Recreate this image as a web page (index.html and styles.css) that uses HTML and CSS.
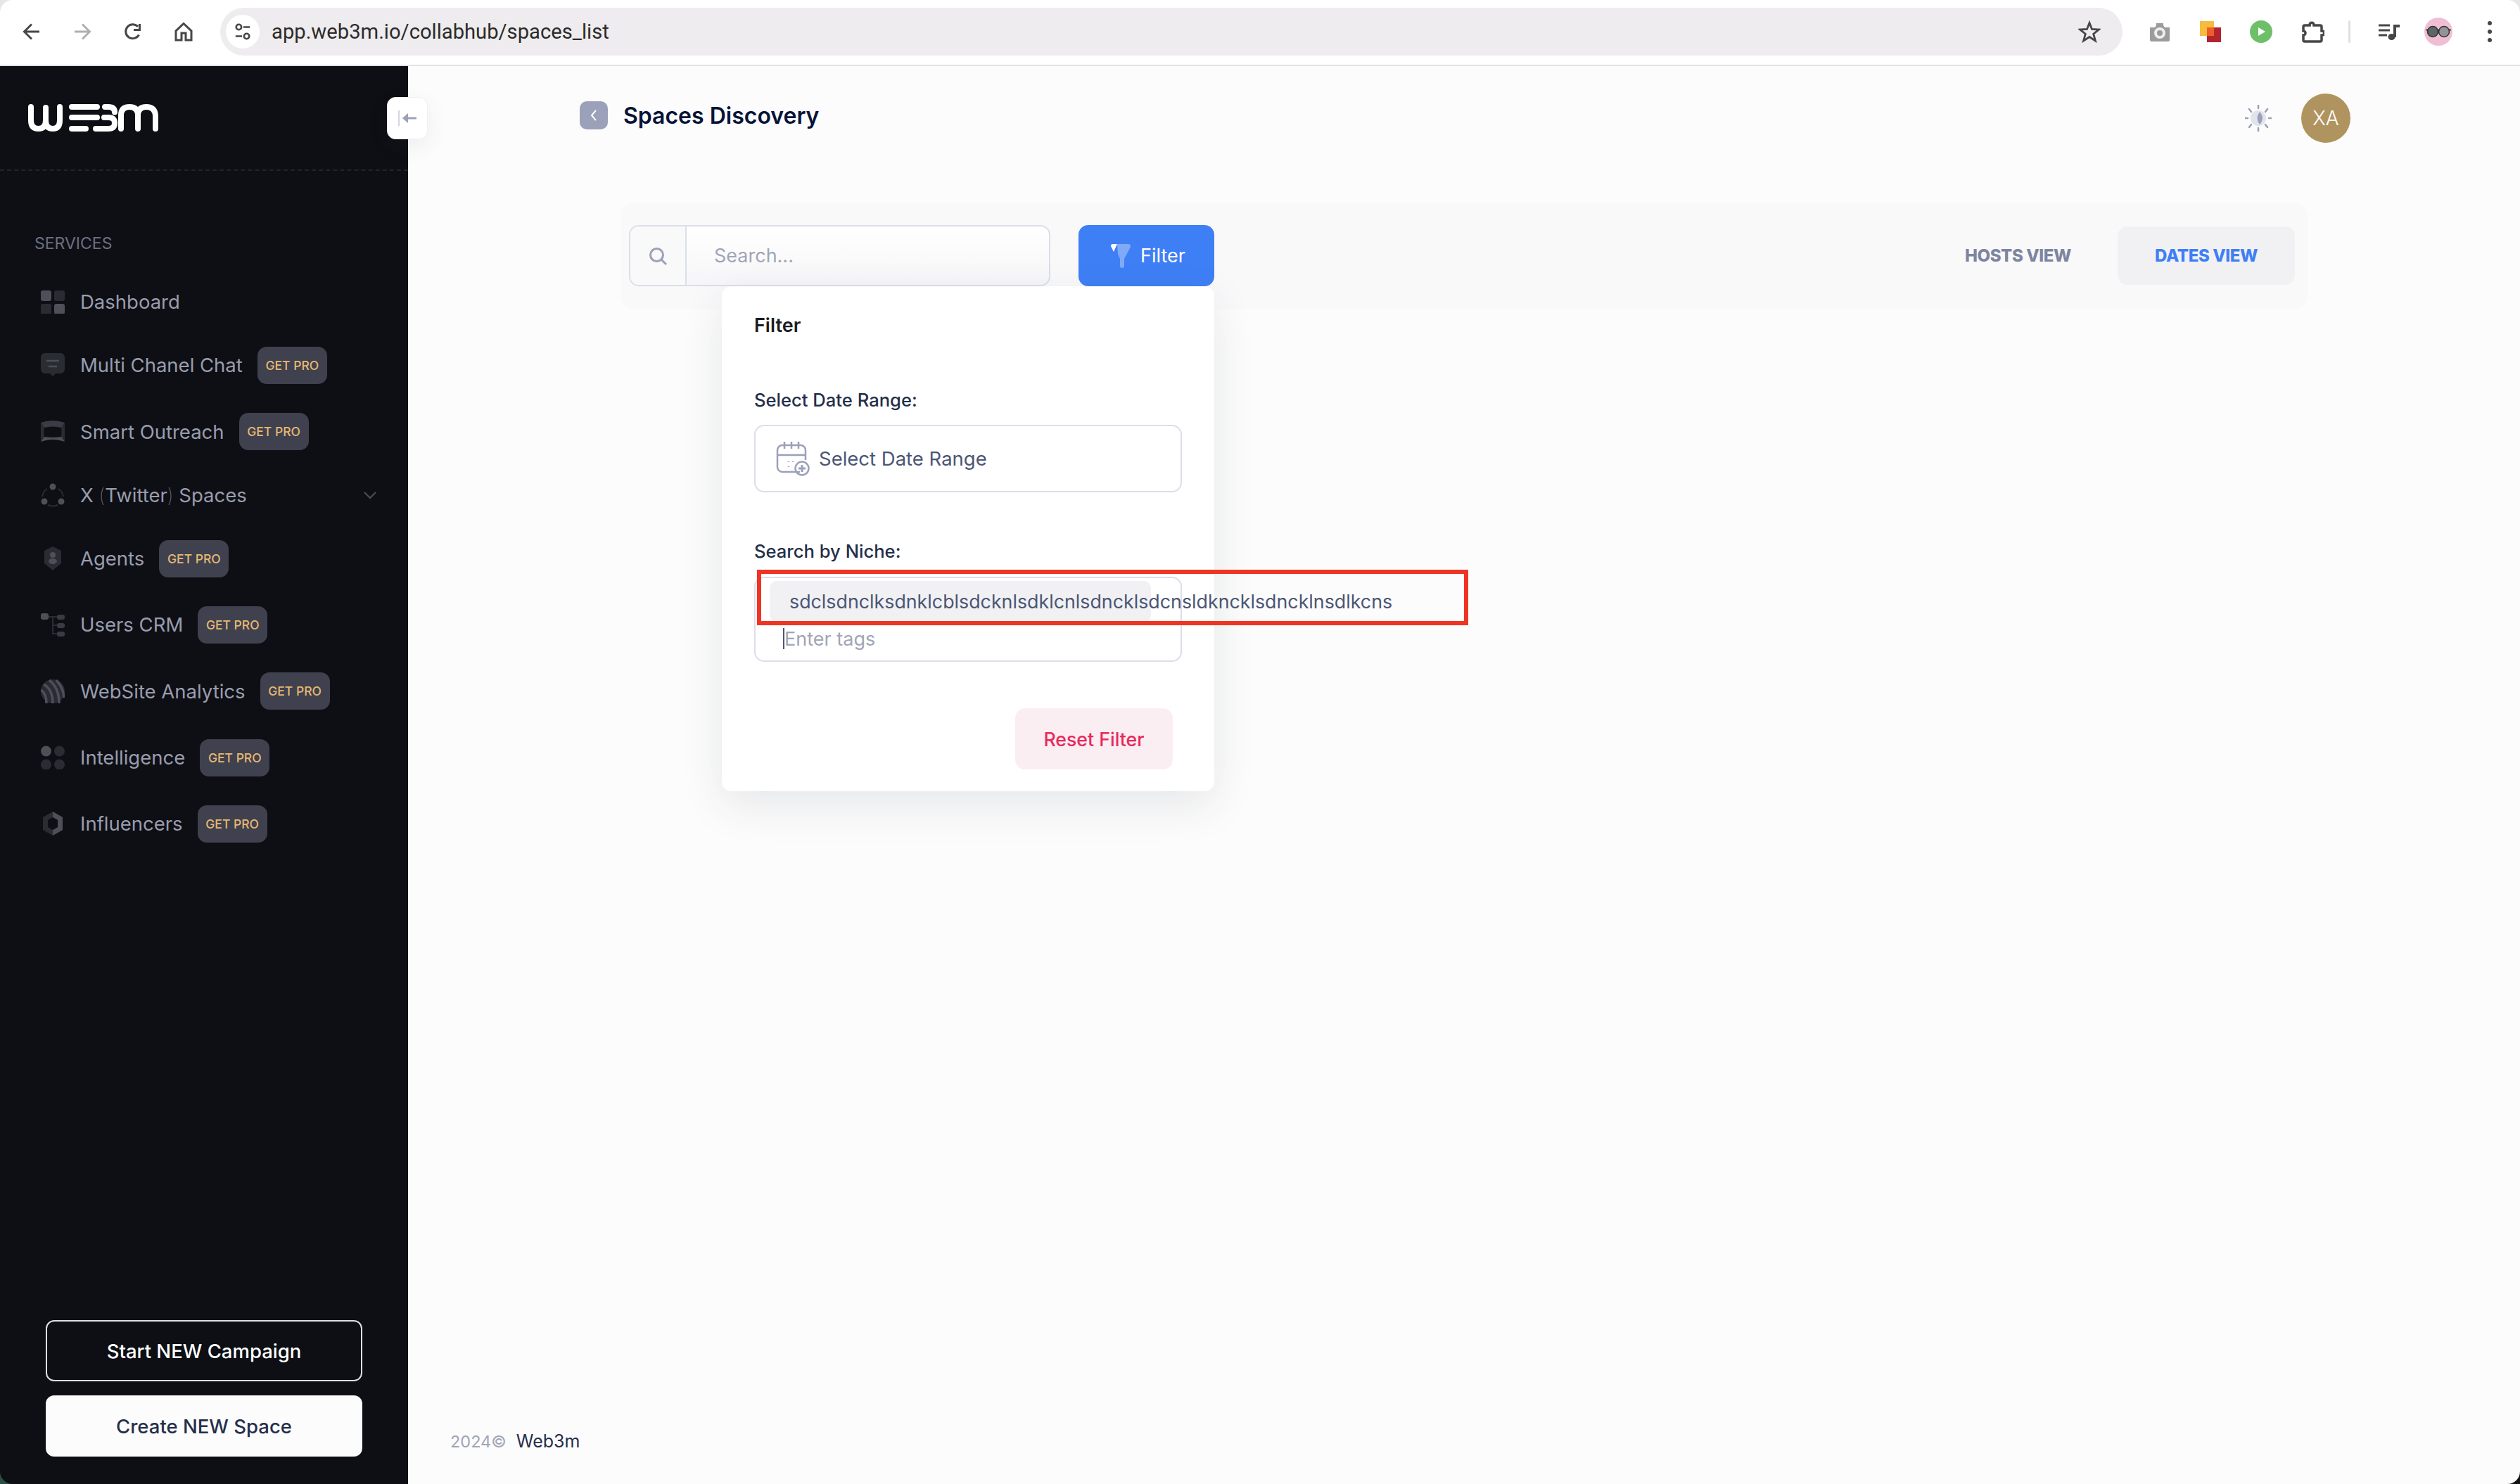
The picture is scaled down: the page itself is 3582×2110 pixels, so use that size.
FILE: index.html
```html
<!DOCTYPE html>
<html lang="en">
<head>
<meta charset="utf-8">
<title>Spaces Discovery</title>
<link rel="stylesheet" href="styles.css">
</head>
<body>
<div class="window">
  <header class="chrome">
    <div class="nav-icons">
      <svg class="ci" viewBox="0 0 28 28"><path d="M25 14H4M14 3.5 3.5 14 14 24.5" class="st"/></svg>
      <svg class="ci" viewBox="0 0 28 28"><path d="M3 14h21M14 3.5 24.500 14 14 24.500" class="st st-dim"/></svg>
      <svg class="ci" viewBox="0 0 28 28"><path d="M22.500 18.500A10 10 0 1 1 21 6.800" class="st"/><path d="M23.500 3v8.500H15" class="st"/></svg>
      <svg class="ci" viewBox="0 0 28 28"><path d="M14 2.500 25 13v13h-8V16h-6v10H3V13Z" class="st"/></svg>
    </div>
    <div class="url-bar">
      <span class="site-btn">
        <svg viewBox="0 0 28 28" class="site-ic"><circle cx="8" cy="7" r="4" class="st2"/><path d="M15 7h10M3 21h10" class="st2"/><circle cx="20" cy="21" r="4" class="st2"/></svg>
      </span>
      <span class="url-text">app.web3m.io/collabhub/spaces_list</span>
      <svg class="star" viewBox="0 0 32 32"><path d="M16 3.500 19.500 12.500 29.500 13 21.700 19.200 24.400 29 16 23.500 7.600 29 10.300 19.200 2.500 13 12.500 12.500Z" class="st2"/></svg>
    </div>
    <div class="ext-icons">
      <svg class="ext" viewBox="0 0 32 32"><path d="M2 10h7l2-3V4h10v3l2 3h7v18a2 2 0 0 1-2 2H4a2 2 0 0 1-2-2Z" fill="#9c9c9c"/><circle cx="16" cy="18" r="6" fill="none" stroke="#eee" stroke-width="4"/></svg>
      <svg class="ext" viewBox="0 0 32 32"><rect x="11" y="10" width="20" height="21" fill="#b3242f"/><rect x="1" y="1" width="20" height="21" fill="#f6bb3f"/><rect x="11" y="10" width="10" height="12" fill="#ee5f26"/></svg>
      <svg class="ext" viewBox="0 0 32 32"><circle cx="16" cy="16" r="16" fill="#6dc068"/><path d="M12 10l10 6-10 6Z" fill="#fff"/></svg>
      <svg class="ext ext-puzzle" viewBox="0 0 34 32"><path d="M6 7h7c0-5 6-5 6 0h9a2 2 0 0 1 2 2v6c5 0 5 6 0 6v7a2 2 0 0 1-2 2H6a2 2 0 0 1-2-2v-7c4 0 4-6 0-6V9a2 2 0 0 1 2-2Z" fill="none" stroke="#474747" stroke-width="3.500"/></svg>
      <span class="ext-sep"></span>
      <svg class="ext-music" viewBox="0 0 30 24"><path d="M0 3h16M0 10h16M0 17h12" stroke="#474747" stroke-width="3" fill="none"/><path d="M21 2h9v4h-5v14h-4Z" fill="#474747"/><ellipse cx="18.500" cy="19.500" rx="5" ry="4.500" fill="#474747"/></svg>
      <span class="profile">
        <svg viewBox="0 0 40 40" class="profile-ic"><circle cx="12" cy="20" r="7.500" fill="#5f6566" stroke="#333" stroke-width="1.500"/><circle cx="28" cy="20" r="7.500" fill="#8f9596" stroke="#333" stroke-width="1.500"/><path d="M2 18l3-1M38 18l-3-1M19 18h2" stroke="#333" stroke-width="1.500"/></svg>
      </span>
      <span class="dots"><i></i><i></i><i></i></span>
    </div>
  </header>

  <div class="app">
    <aside class="sidebar">
      <div class="brand">
        <svg class="logo" viewBox="40 148 185 39" aria-label="Web3m"><g fill="none" stroke="#fff" stroke-width="8" stroke-linecap="round"><path d="M44 152v19q0 12 10.500 12T65 171v-18M65 171q0 12 10 12t10-12v-19"/><path d="M102 152h36M102 167h36M102 183h20M136 183h18q9 0 9-8t-9-8h-6M149 152h5q9 0 9 7.500"/><path d="M172 183v-19q0-12 12-12t12 12v19M196 164q0-12 12-12t13 12v19"/></g></svg>
        <button class="collapse" type="button" aria-label="Collapse">
          <svg viewBox="0 0 28 24" class="collapse-ic"><path d="M2 1v22" stroke="#c5c9d6" stroke-width="1.500"/><path d="M27 12H12" stroke="#9aa1b8" stroke-width="3"/><path d="M15 5 7 12l8 7Z" fill="#9aa1b8"/></svg>
        </button>
      </div>
      <nav class="nav">
        <div class="nav-head">SERVICES</div>
        <ul class="nav-list">
          <li class="nav-item"><svg class="ni" viewBox="0 0 34 34"><rect width="15" height="15" y="1" rx="3" fill="#4e5059"/><rect x="19" y="1" width="15" height="15" rx="3" fill="#2a2c33"/><rect y="20" width="15" height="15" rx="3" fill="#2a2c33"/><rect x="19" y="20" width="15" height="15" rx="3" fill="#4e5059"/></svg><span>Dashboard</span></li>
          <li class="nav-item"><svg class="ni" viewBox="0 0 34 34"><path d="M6 0h22a6 6 0 0 1 6 6v17a6 6 0 0 1-6 6h-7l-4 4-4-4H6a6 6 0 0 1-6-6V6a6 6 0 0 1 6-6Z" fill="#2a2c33"/><path d="M8 11h18M11 19h12" stroke="#4e5059" stroke-width="2.500"/></svg><span>Multi Chanel Chat</span><b class="pro">GET PRO</b></li>
          <li class="nav-item"><svg class="ni" viewBox="0 0 34 34"><path d="M0 4q17-6 34 0l-5 7q-12-3-24 0Z" fill="#3a3c45"/><path d="M34 4q1 14 0 27l-5-7q1-7 0-13Z" fill="#2a2c33"/><path d="M0 31q17-6 34 0l-5-7q-12 2-24 0Z" fill="#4e5059"/><path d="M0 4q-1 14 0 27l5-7q-1-7 0-13Z" fill="#2a2c33"/></svg><span>Smart Outreach</span><b class="pro">GET PRO</b></li>
          <li class="nav-item"><svg class="ni" viewBox="0 0 34 34"><circle cx="17" cy="5" r="4.500" fill="#4e5059"/><circle cx="5" cy="26" r="4.500" fill="#4e5059"/><circle cx="29" cy="26" r="4.500" fill="#4e5059"/><path d="M9 8q-6 4-7 11M25 8q6 4 7 11M10 31q7 3 14 0" stroke="#2a2c33" stroke-width="2" fill="none"/></svg><span>X <span class="paren">(</span>Twitter<span class="paren">)</span> Spaces</span>
            <svg class="chev" viewBox="0 0 18 12"><path d="M1 2l8 8 8-8" fill="none" stroke="#4e5059" stroke-width="2"/></svg></li>
          <li class="nav-item"><svg class="ni" viewBox="0 0 34 34"><path d="M17 0 29 6v18L17 34 5 24V6Z" fill="#2a2c33"/><circle cx="17" cy="12" r="4" fill="#4e5059"/><ellipse cx="17" cy="21" rx="6" ry="4" fill="#4e5059"/></svg><span>Agents</span><b class="pro">GET PRO</b></li>
          <li class="nav-item"><svg class="ni" viewBox="0 0 34 34"><rect y="1" width="11" height="9" rx="3" fill="#4e5059"/><rect x="23" y="3" width="11" height="7" rx="3" fill="#3a3c45"/><rect x="23" y="15" width="11" height="7" rx="3" fill="#3a3c45"/><rect x="23" y="27" width="11" height="7" rx="3" fill="#3a3c45"/><path d="M11 6h12M17 6v24h6M17 18h6" stroke="#2a2c33" stroke-width="2" fill="none"/></svg><span>Users CRM</span><b class="pro">GET PRO</b></li>
          <li class="nav-item"><svg class="ni" viewBox="0 0 34 34"><circle cx="17" cy="17" r="17" fill="#2a2c33"/><path d="M8 34Q8 20 0 15M17 34Q17 14 4 7M26 34Q26 12 12 1M33 26Q32 12 22 1" fill="none" stroke="#4e5059" stroke-width="3.500"/></svg><span>WebSite Analytics</span><b class="pro">GET PRO</b></li>
          <li class="nav-item"><svg class="ni" viewBox="0 0 34 34"><circle cx="7.500" cy="8" r="7.500" fill="#4e5059"/><circle cx="26.500" cy="8" r="7.500" fill="#2a2c33"/><circle cx="7.500" cy="27" r="7.500" fill="#2a2c33"/><circle cx="26.500" cy="27" r="7.500" fill="#2a2c33"/></svg><span>Intelligence</span><b class="pro">GET PRO</b></li>
          <li class="nav-item"><svg class="ni" viewBox="0 0 34 34"><path d="M17 0 31 8v18L17 34 3 26V8Z" fill="#2a2c33"/><path d="M17 0 31 8v18L17 34v-8l7-4v-10l-7-4Z" fill="#4e5059"/><path d="M17 8l7 4v10l-7 4-7-4V12Z" fill="#0d0f14"/></svg><span>Influencers</span><b class="pro">GET PRO</b></li>
        </ul>
      </nav>
      <div class="side-actions">
        <button class="side-btn side-btn-outline" type="button">Start NEW Campaign</button>
        <button class="side-btn side-btn-solid" type="button">Create NEW Space</button>
      </div>
    </aside>

    <main class="main">
      <div class="topbar">
        <div class="page-title">
          <span class="back"><svg viewBox="0 0 40 40" class="back-ic"><path d="M23 13l-6 7 6 7" fill="none" stroke="#fff" stroke-width="2"/></svg></span>
          <h1>Spaces Discovery</h1>
        </div>
        <div class="top-actions">
          <svg class="theme" viewBox="0 0 38 38"><circle cx="19" cy="19" r="11" fill="#e2e4ec"/><path d="M21 10q8 9 0 18q-7-9 0-18Z" fill="#9aa1b8"/><path d="M19 0v5M19 33v5M0 19h4M34 19h4M6 6l3 4M32 6l-3 4M6 32l3-4M32 32l-3-4" stroke="#9aa1b8" stroke-width="2.500" stroke-linecap="round"/></svg>
          <span class="avatar">XA</span>
        </div>
      </div>

      <section class="toolbar">
        <div class="search">
          <span class="search-ic-box"><svg viewBox="0 0 28 28" class="search-ic"><circle cx="12.500" cy="12.500" r="9" fill="none" stroke="#9aa1b8" stroke-width="3"/><path d="M19 19l7 7" stroke="#9aa1b8" stroke-width="3"/></svg></span>
          <span class="search-input">Search...</span>
        </div>
        <div class="filter-wrap">
          <button class="filter-btn" type="button">
            <svg viewBox="0 0 28 34" class="filter-ic"><path d="M9 0h16q3 0 3 4L19 21v10q0 3-3 3t-3-3V21L10 14Z" fill="#80aaf8"/><path d="M0 3q0-3 3-3h6L4 11Z" fill="#fff"/></svg>
            Filter
          </button>
          <div class="filter-pop">
            <div class="pop-title">Filter</div>
            <label class="pop-label pop-label-date">Select Date Range:</label>
            <div class="date-field">
              <svg viewBox="0 0 48 50" class="cal"><path d="M34 44H9a7 7 0 0 1-7-7V13a7 7 0 0 1 7-7h26a7 7 0 0 1 7 7v14M2 20h40M12 1v10M22 1v10M32 1v10" fill="none" stroke="#9aa1b8" stroke-width="2.500"/><path d="M18 29v1M24 29v1M18 36v1" stroke="#9aa1b8" stroke-width="2.500"/><circle cx="37" cy="39" r="9.500" fill="none" stroke="#9aa1b8" stroke-width="2.500"/><path d="M37 34v10M32 39h10" stroke="#9aa1b8" stroke-width="3"/></svg>
              <span>Select Date Range</span>
            </div>
            <label class="pop-label pop-label-niche">Search by Niche:</label>
            <div class="tags-field">
              <div class="tag"><span class="tag-text">sdclsdnclksdnklcblsdcknlsdklcnlsdncklsdcnsldkncklsdncklnsdlkcns</span></div>
              <div class="tag-input"><span class="caret"></span>Enter tags</div>
              <div class="annotation"></div>
            </div>
            <div class="pop-foot"><button class="reset" type="button">Reset Filter</button></div>
          </div>
        </div>
        <div class="views">
          <span class="view">HOSTS VIEW</span>
          <span class="view view-active">DATES VIEW</span>
        </div>
      </section>

      <footer class="foot"><span class="foot-year">2024©</span><span class="foot-brand">Web3m</span></footer>
    </main>
  </div>
</div>
</body>
</html>
```
FILE: styles.css
```css
* { box-sizing: border-box; }
html, body { margin: 0; height: 100%; }
body {
  font-family: Inter, "Noto Sans", sans-serif;
  background:
    linear-gradient(#e6e6e6, #e6e6e6) top / 100% 50% no-repeat,
    linear-gradient(to right, #2c4f45 0 50%, #141414 50% 100%);
}
.window {
  height: 2110px;
  width: 3582px;
  border-radius: 18px;
  overflow: hidden;
  display: flex;
  flex-direction: column;
}

/* Browser chrome */
.chrome {
  height: 94px;
  flex: none;
  background: #fff;
  border-bottom: 2px solid #e2e2e2;
  display: flex;
  align-items: center;
  padding: 0 41px 2px 31px;
}
.nav-icons { display: flex; gap: 44px; margin-right: 38px; }
.ci { width: 28px; height: 28px; display: block; }
.st { fill: none; stroke: #474747; stroke-width: 3; }
.st-dim { stroke: #b0b0b0; }
.st2 { fill: none; stroke: #474747; stroke-width: 2.8; }
.url-bar {
  flex: 1;
  height: 68px;
  background: #eeecee;
  border-radius: 34px;
  display: flex;
  align-items: center;
  padding: 0 31px 0 8px;
  margin-right: 37px;
}
.site-btn {
  width: 48px;
  height: 48px;
  border-radius: 50%;
  background: #fff;
  display: flex;
  align-items: center;
  justify-content: center;
  flex: none;
}
.site-ic { width: 26px; height: 26px; }
.url-text {
  margin-left: 17px;
  font-family: Roboto, sans-serif;
  font-size: 29.2px;
  color: #2b2b2b;
  flex: 1;
}
.star { width: 32px; height: 32px; flex: none; }
.ext-icons { display: flex; align-items: center; gap: 40px; }
.ext { width: 32px; height: 32px; display: block; flex: none; }
.ext-puzzle { width: 34px; }
.ext-sep { width: 3px; height: 32px; background: #e0e0e0; border-radius: 2px; margin-left: -6px; }
.ext-music { width: 30px; height: 24px; display: block; }
.profile {
  width: 40px; height: 40px; border-radius: 50%;
  background: #f0bed2; margin-left: -5px;
  display: flex;
}
.profile-ic { width: 40px; height: 40px; }
.dots { display: flex; flex-direction: column; gap: 6px; margin-left: 11px; }
.dots i { width: 6px; height: 6px; border-radius: 50%; background: #474747; display: block; margin-left: -1px; margin-right: -1px; }

/* App */
.app { flex: 1; display: flex; min-height: 0; }
.sidebar {
  width: 580px;
  flex: none;
  background: #0d0f14;
  display: flex;
  flex-direction: column;
  position: relative;
}
.brand {
  height: 149px;
  flex: none;
  border-bottom: 2px dashed #22242b;
  padding: 54px 0 0 40px;
}
.logo { width: 185px; height: 39px; display: block; }
.collapse {
  position: absolute;
  left: 550px;
  top: 44px;
  width: 58px;
  height: 60px;
  padding: 0 0 0 14px;
  border: 1px solid #f1f1f4;
  border-radius: 12px;
  background: #fff;
  box-shadow: 0 10px 30px rgba(60, 65, 90, .08);
  display: flex;
  align-items: center;
}
.collapse-ic { width: 28px; height: 24px; }
.nav { flex: 1; padding-top: 89px; }
.nav-head {
  font-size: 23px;
  line-height: 28px;
  color: #6b6e82;
  padding-left: 49px;
}
.nav-list {
  list-style: none;
  margin: 46.5px 0 0;
  padding: 0 45px 0 58px;
  display: flex;
  flex-direction: column;
  gap: 41.3px;
}
.nav-item {
  display: flex;
  align-items: center;
  min-height: 45px;
  font-size: 27.5px;
  color: #9a9cae;
  position: relative;
}
.paren { font-weight: 100; }
.ni { width: 34px; height: 34px; flex: none; margin-right: 22px; display: block; }
.pro {
  font-size: 17.5px;
  font-weight: 500;
  color: #e8b873;
  background: #3f414e;
  height: 53px;
  width: 99px;
  justify-content: center;
  border-radius: 13px;
  display: flex;
  align-items: center;
  margin-left: 21px;
}
.chev { width: 18px; height: 12px; margin-left: auto; }
.side-actions {
  padding: 0 65px 39px;
  display: flex;
  flex-direction: column;
  gap: 20px;
}
.side-btn {
  height: 87px;
  border-radius: 12px;
  font: 500 27.500px Inter, sans-serif;
}
.side-btn-outline { background: #0d0f14; border: 2px solid #dbdfe9; color: #fff; }
.side-btn-solid { background: #fcfcfc; border: 0; color: #252f4a; }

/* Main */
.main {
  flex: 1;
  background: #fcfcfc;
  display: flex;
  flex-direction: column;
  min-width: 0;
}
.topbar {
  display: flex;
  justify-content: space-between;
  padding: 39px 241px 0 244px;
  height: 194px;
  flex: none;
}
.page-title { display: flex; align-items: center; gap: 22px; height: 62px; }
.page-title h1 { margin: 0; font-size: 32px; font-weight: 600; color: #071437; }
.back { width: 40px; height: 40px; border-radius: 10px; background: #9aa1b8; display: block; }
.back-ic { width: 40px; height: 40px; display: block; }
.top-actions { display: flex; align-items: center; gap: 42px; height: 70px; }
.theme { width: 38px; height: 38px; }
.avatar {
  width: 70px; height: 70px; border-radius: 50%;
  background: #b0945f; color: #fff;
  display: flex; align-items: center; justify-content: center;
  font-size: 28px; font-weight: 300;
}
.toolbar {
  margin-left: 302px;
  width: 2398px;
  height: 152px;
  flex: none;
  background: #f9f9fa;
  border-radius: 20px;
  display: flex;
  align-items: center;
  padding: 0 18px 1px 12px;
}
.search {
  width: 599px;
  height: 87px;
  border: 2px solid #dbdfe9;
  border-radius: 14px;
  background: linear-gradient(#fff, #f6f6f8);
  display: flex;
  align-items: stretch;
  flex: none;
}
.search-ic-box {
  width: 80px;
  background: #f9f9fa;
  border-right: 2px solid #dbdfe9;
  border-radius: 12px 0 0 12px;
  display: flex;
  align-items: center;
  justify-content: center;
}
.search-ic { width: 28px; height: 28px; }
.search-input {
  display: flex;
  align-items: center;
  padding-left: 39px;
  font-size: 27px;
  color: #a1a5b7;
}
.filter-wrap { position: relative; margin-left: 40px; }
.filter-btn {
  width: 193px;
  height: 87px;
  background: #3f7ff5;
  border: 0;
  border-radius: 14px;
  color: #fff;
  font: 400 27px Inter, sans-serif;
  display: flex;
  align-items: center;
  gap: 14px;
  padding: 0 0 0 46px;
}
.filter-ic { width: 28px; height: 34px; }
.filter-pop {
  position: absolute;
  right: 0;
  top: 87px;
  width: 700px;
  height: 718px;
  background: #fff;
  border-radius: 14px;
  box-shadow: 0 20px 60px rgba(40, 45, 70, .1);
  padding: 41px 46px;
  z-index: 5;
}
.pop-title { font-size: 27px; font-weight: 600; color: #1b1c22; line-height: 30px; }
.pop-label { display: block; font-size: 25.600px; line-height: 32px; color: #252f4a; font-weight: 500; }
.pop-label-date { margin-top: 75px; }
.pop-label-niche { margin-top: 68px; }
.date-field {
  margin-top: 19px;
  height: 96px;
  border: 2px solid #dbdfe9;
  border-radius: 14px;
  display: flex;
  align-items: center;
  padding-left: 29px;
  gap: 13px;
  font-size: 27.500px;
  color: #4b5675;
}
.cal { width: 48px; height: 50px; flex: none; }
.tags-field {
  margin-top: 20px;
  height: 121px;
  border: 2px solid #dbdfe9;
  border-radius: 14px;
  position: relative;
  padding: 4px 0 0 20px;
}
.tag {
  width: 542px;
  height: 58px;
  background: #f1f1f4;
  border-radius: 10px;
  display: flex;
  align-items: center;
  padding-left: 28px;
}
.tag-text { font-size: 26.800px; color: #4b5675; white-space: nowrap; position: relative; z-index: 1; }
.tag-input {
  display: flex;
  align-items: center;
  margin: 9px 0 0 19px;
  height: 30px;
  font-size: 27px;
  color: #a1a5b7;
}
.caret { width: 2px; height: 30px; background: #4b5675; }
.annotation {
  position: absolute;
  left: 2px;
  top: -12px;
  width: 1011px;
  height: 79px;
  border: 6px solid #ee3524;
  z-index: 2;
}
.pop-foot { display: flex; justify-content: flex-end; margin: 66px 13px 0 0; }
.reset {
  width: 224px;
  height: 87px;
  border: 0;
  border-radius: 14px;
  background: #fbeef2;
  color: #e8295c;
  font: 500 26.700px Inter, sans-serif;
}
.views { margin-left: auto; display: flex; align-items: center; }
.view { font-size: 24px; font-weight: 800; letter-spacing: -.4px; color: #7e859f; }
.view-active {
  width: 252px;
  height: 83px;
  margin-left: 66px;
  background: #f1f1f4;
  border-radius: 14px;
  color: #3f7ff5;
  display: flex;
  align-items: center;
  justify-content: center;
}
.foot {
  margin-top: auto;
  padding: 0 0 45px 60px;
  line-height: 30px;
  display: flex;
  align-items: baseline;
  gap: 14px;
}
.foot-year { font-size: 23.500px; color: #a1a5b7; }
.foot-brand { font-size: 25px; color: #252f4a; }
```
